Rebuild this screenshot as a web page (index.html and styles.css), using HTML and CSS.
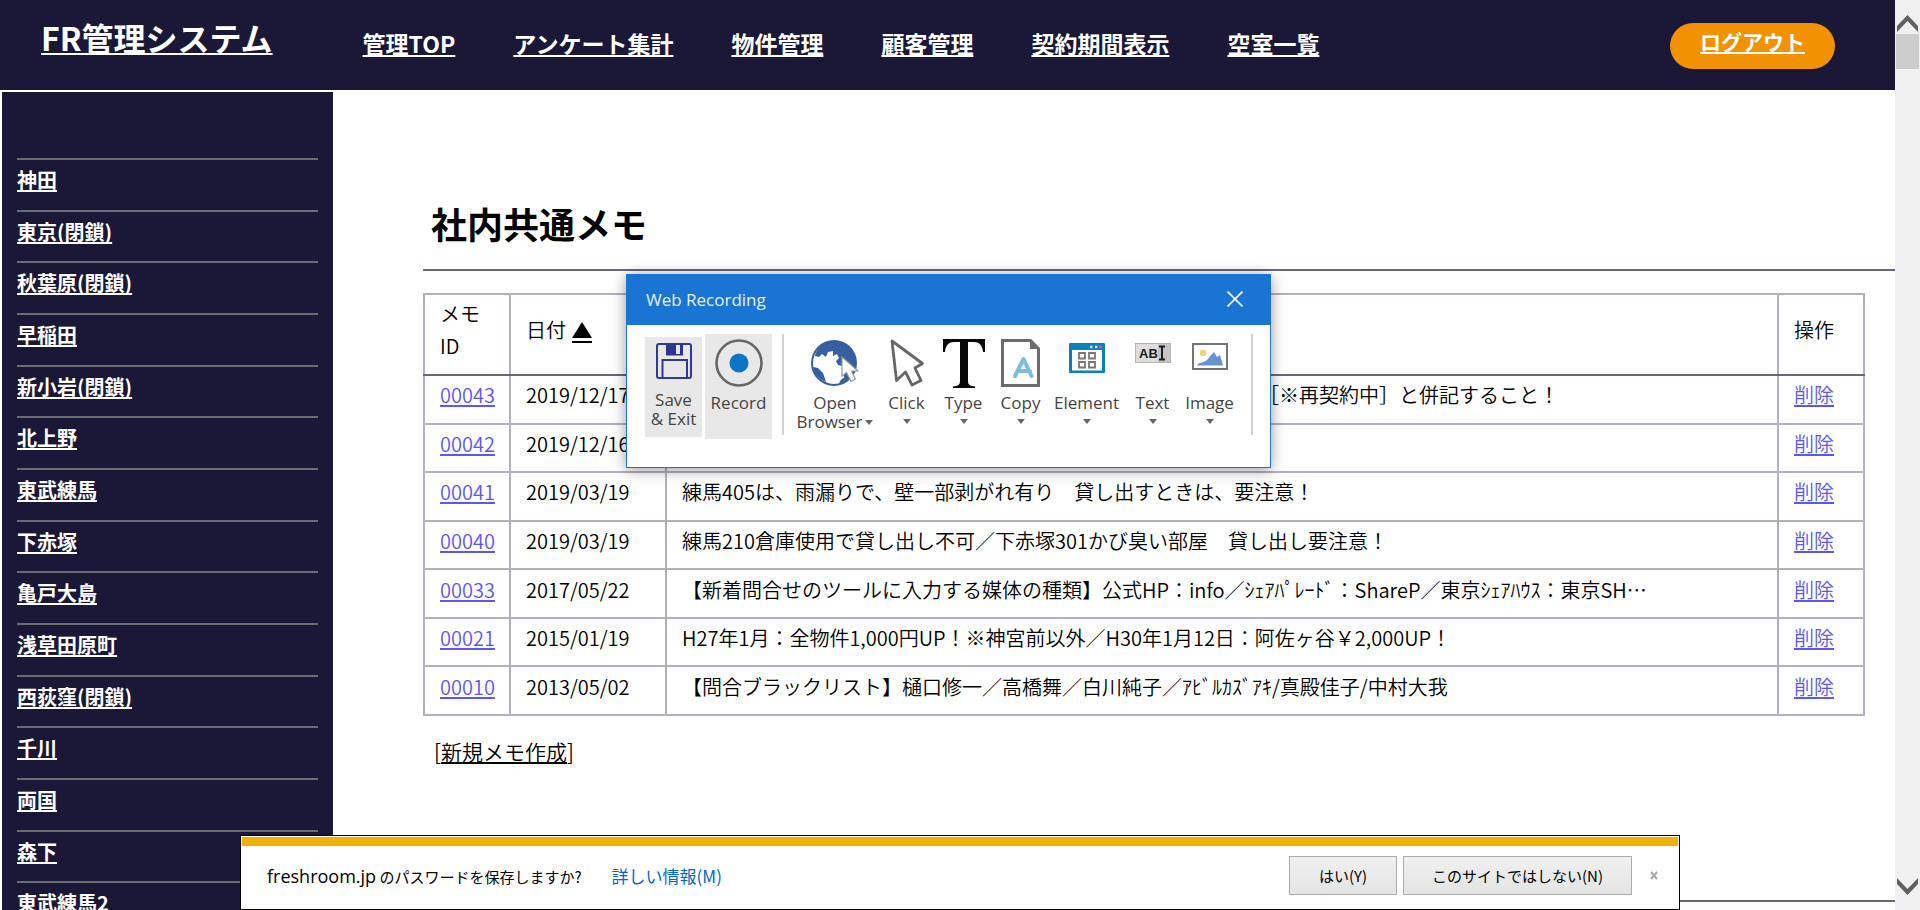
FILE: index.html
```
<!DOCTYPE html>
<html lang="ja">
<head>
<meta charset="utf-8">
<title>FR管理システム</title>
<link rel="stylesheet" href="styles.css">
</head>
<body>
<div class="viewport">
  <div class="page">
    <header class="header">
      <a class="logo" href="#">FR管理システム</a>
      <nav class="nav">
        <a href="#">管理TOP</a>
        <a href="#">アンケート集計</a>
        <a href="#">物件管理</a>
        <a href="#">顧客管理</a>
        <a href="#">契約期間表示</a>
        <a href="#">空室一覧</a>
      </nav>
      <a class="logout" href="#">ログアウト</a>
    </header>
    <div class="body">
      <aside class="sidebar">
        <ul class="places">
          <li><a href="#">神田</a></li>
          <li><a href="#">東京(閉鎖)</a></li>
          <li><a href="#">秋葉原(閉鎖)</a></li>
          <li><a href="#">早稲田</a></li>
          <li><a href="#">新小岩(閉鎖)</a></li>
          <li><a href="#">北上野</a></li>
          <li><a href="#">東武練馬</a></li>
          <li><a href="#">下赤塚</a></li>
          <li><a href="#">亀戸大島</a></li>
          <li><a href="#">浅草田原町</a></li>
          <li><a href="#">西荻窪(閉鎖)</a></li>
          <li><a href="#">千川</a></li>
          <li><a href="#">両国</a></li>
          <li><a href="#">森下</a></li>
          <li><a href="#">東武練馬2</a></li>
        </ul>
      </aside>
      <main class="main">
        <h1 class="title">社内共通メモ</h1>
        <table class="memos">
          <colgroup><col class="col-id"><col class="col-date"><col><col class="col-op"></colgroup>
          <thead>
            <tr><th>メモ<br>ID</th><th>日付 <a class="sort" href="#" aria-label="並べ替え"><svg width="20" height="16" viewBox="0 0 20 16"><path d="M10 0L20 16H0z"/></svg></a></th><th></th><th>操作</th></tr>
          </thead>
          <tbody>
            <tr><td><a href="#">00043</a></td><td>2019/12/17</td><td class="tail">［※再契約中］と併記すること！</td><td><a href="#">削除</a></td></tr>
            <tr><td><a href="#">00042</a></td><td>2019/12/16</td><td></td><td><a href="#">削除</a></td></tr>
            <tr><td><a href="#">00041</a></td><td>2019/03/19</td><td>練馬405は、雨漏りで、壁一部剥がれ有り　貸し出すときは、要注意！</td><td><a href="#">削除</a></td></tr>
            <tr><td><a href="#">00040</a></td><td>2019/03/19</td><td>練馬210倉庫使用で貸し出し不可／下赤塚301かび臭い部屋　貸し出し要注意！</td><td><a href="#">削除</a></td></tr>
            <tr><td><a href="#">00033</a></td><td>2017/05/22</td><td>【新着問合せのツールに入力する媒体の種類】公式HP：info／ｼｪｱﾊﾟﾚｰﾄﾞ：ShareP／東京ｼｪｱﾊｳｽ：東京SH…</td><td><a href="#">削除</a></td></tr>
            <tr><td><a href="#">00021</a></td><td>2015/01/19</td><td>H27年1月：全物件1,000円UP！※神宮前以外／H30年1月12日：阿佐ヶ谷￥2,000UP！</td><td><a href="#">削除</a></td></tr>
            <tr><td><a href="#">00010</a></td><td>2013/05/02</td><td>【問合ブラックリスト】樋口修一／高橋舞／白川純子／ｱﾋﾞﾙｶｽﾞｱｷ/真殿佳子/中村大我</td><td><a href="#">削除</a></td></tr>
          </tbody>
        </table>
        <p class="create">[<a href="#">新規メモ作成</a>]</p>
      </main>
    </div>
  </div>
  <div class="scrollbar">
    <button class="scroll-btn" aria-label="上へ"><svg width="21" height="17" viewBox="0 0 21 17"><path d="M0 11L10.500 0L21 11V17L10.500 6L0 17z" fill="#606060"/></svg></button>
    <div class="thumb"></div>
    <button class="scroll-btn scroll-down" aria-label="下へ"><svg width="21" height="17" viewBox="0 0 21 17"><path d="M0 6L10.500 17L21 6V0L10.500 11L0 0z" fill="#606060"/></svg></button>
  </div>
</div>

<section class="recorder">
  <div class="rec-bar">
    <span>Web Recording</span>
    <button class="rec-close" aria-label="Close"><svg width="16" height="16" viewBox="0 0 16 16"><path d="M0.500 0.500L15.500 15.500M15.500 0.500L0.500 15.500" stroke="#fff" stroke-width="1.600"/></svg></button>
  </div>
  <div class="tools">
    <button class="tool tool-save">
      <span class="pic"><svg width="36" height="36" viewBox="0 0 36 36"><rect x="1" y="1" width="34" height="34" rx="2" fill="none" stroke="#2e3a96" stroke-width="2"/><path d="M10 1H27V12.500H10z" fill="#2b3694"/><rect x="20" y="2" width="4" height="9" fill="#e8e8e8"/><path d="M6.500 35V17H31V35" fill="none" stroke="#2e3a96" stroke-width="2"/></svg></span>
      <span>Save<br>&amp; Exit</span>
    </button>
    <button class="tool tool-record">
      <span class="pic"><svg width="48" height="48" viewBox="0 0 48 48"><circle cx="24" cy="24" r="22.500" fill="none" stroke="#666" stroke-width="2.600"/><circle cx="24" cy="24" r="9.500" fill="#0a76c4"/></svg></span>
      <span>Record</span>
    </button>
    <span class="rule"></span>
    <button class="tool tool-open">
      <span class="pic"><svg width="48" height="48" viewBox="0 0 48 48"><circle cx="23" cy="24" r="22" fill="#fff" stroke="#365f9f" stroke-width="2"/><path d="M4 16C8 6 16 2 23 2C36 2 45 12 45 23C45 32 41 38 36 41L33 41V29L31 27L27 26L25 22L28 19L26 15L22 17L22 12L17 13L15 18L11 15L8 18L4 17z" fill="#365f9f"/><path d="M2 28L7 29L12 34L15 43C8 40 3 35 2 28zM29 42L32 39L36 41L28 45z" fill="#365f9f"/><path d="M31 18V37L35.500 33.500L40 42.500L44.500 40L40.500 32H47z" fill="#fff" stroke="#999" stroke-width="1.200"/></svg></span>
      <span>Open<br>Browser<i class="arrow"></i></span>
    </button>
    <button class="tool">
      <span class="pic"><svg width="34" height="48" viewBox="0 0 34 48"><path d="M2 2L6.500 41.500L15.500 33L22 46L31 41.500L25 29L32.500 24.500z" fill="#fff" stroke="#666" stroke-width="2.800" stroke-linejoin="round"/></svg></span>
      <span>Click</span><i class="arrow"></i>
    </button>
    <button class="tool">
      <span class="pic"><svg width="42" height="49" viewBox="0 0 42 49"><path d="M0 0H42V13H40C39.500 6 36 3 31 3H25V42C25 46 27 47 32 47.500V49H10V47.500C15 47 17 46 17 42V3H11C6 3 2.500 6 2 13H0z" fill="#080808"/></svg></span>
      <span>Type</span><i class="arrow"></i>
    </button>
    <button class="tool">
      <span class="pic"><svg width="39" height="48" viewBox="0 0 39 48"><path d="M1.500 1.500H29.500L37.500 9.500V46.500H1.500z" fill="#fff" stroke="#6c6c6c" stroke-width="3"/><path d="M29 1V10H38z" fill="#6c6c6c"/><path d="M14 37L22.500 20L30.500 37M17 32H29" fill="none" stroke="#7dbde2" stroke-width="4" stroke-linecap="round" stroke-linejoin="round"/></svg></span>
      <span>Copy</span><i class="arrow"></i>
    </button>
    <button class="tool tool-wide">
      <span class="pic pic-small"><svg width="36" height="30" viewBox="0 0 36 30"><rect width="36" height="30" rx="1" fill="#0c7fbf"/><rect x="3" y="7" width="30" height="20.500" fill="#fff"/><path d="M21 4H23.500M26 4H28.500" stroke="#bfe3f5" stroke-width="2.500"/><circle cx="31.500" cy="4" r="1.600" fill="#d9607a"/><path d="M10 10H16V15.500H10zM20 10H26V15.500H20zM10 19H16V24.500H10zM20 19H26V24.500H20z" fill="#fff" stroke="#777" stroke-width="1.800"/></svg></span>
      <span>Element</span><i class="arrow"></i>
    </button>
    <button class="tool">
      <span class="pic pic-small"><svg width="36" height="20" viewBox="0 0 36 20"><rect x="0.500" y="0.500" width="35" height="19" fill="#ddd" stroke="#b5b5b0"/><rect x="23" y="1" width="12" height="18" fill="#c6c6c6"/><text x="4" y="15" class="ab">AB</text><path d="M24 3.500H30M24 16.500H30M27 3.500V16.500" stroke="#1b1b1b" stroke-width="2"/></svg></span>
      <span>Text</span><i class="arrow"></i>
    </button>
    <button class="tool">
      <span class="pic pic-small"><svg width="36" height="27" viewBox="0 0 36 27"><rect x="1" y="1" width="34" height="25" fill="#fff" stroke="#757575" stroke-width="2"/><circle cx="11" cy="10" r="3.200" fill="#efd66c"/><path d="M5 22.500C6 19 13 20 16 16L20 11L22 9L25 14L28 12L31 22.500z" fill="#6693cf"/></svg></span>
      <span>Image</span><i class="arrow"></i>
    </button>
    <span class="rule rule-end"></span>
  </div>
</section>

<section class="notice">
  <div class="notice-row">
    <p class="notice-text"><span class="domain">freshroom.jp</span> のパスワードを保存しますか?</p>
    <a class="more" href="#">詳しい情報(M)</a>
    <button class="choice">はい(Y)</button>
    <button class="choice choice-never">このサイトではしない(N)</button>
    <button class="dismiss" aria-label="閉じる"><svg width="8" height="9" viewBox="0 0 8 9"><path d="M1 1L7 8M7 1L1 8" stroke="#a5a5a5" stroke-width="2"/></svg></button>
  </div>
</section>
</body>
</html>
```
FILE: styles.css
```
* { box-sizing: border-box; }

body {
  margin: 0;
  height: 100vh;
  overflow: hidden;
  background: #fff;
  color: #000;
  font-family: "Noto Sans CJK JP", sans-serif;
  font-size: 20px;
}

a {
  color: inherit;
  text-decoration: underline 2px;
  text-underline-offset: 2px;
  text-decoration-skip-ink: none;
}

button {
  margin: 0;
  padding: 0;
  border: 0;
  background: none;
  font: inherit;
  color: inherit;
}

svg { display: block; }

.viewport { display: flex; height: 100vh; }
.page { flex: 1; min-width: 0; overflow: hidden; }

/* Header */
.header {
  display: flex;
  height: 90px;
  padding: 0 60px 0 41px;
  background: #1a1836;
  color: #fff;
  font-weight: 700;
}
.logo { padding-top: 13px; font-size: 32px; line-height: 48px; white-space: nowrap; }
.nav {
  display: flex;
  flex: 1;
  gap: 58px;
  padding: 26px 0 0 90px;
  font-size: 23px;
  line-height: 34px;
  white-space: nowrap;
}
.logout {
  align-self: flex-start;
  margin-top: 23px;
  padding: 3px 30px 13px;
  border-radius: 23px;
  background: #f39200;
  font-size: 21px;
  line-height: 30px;
}

/* Sidebar */
.body { display: flex; padding: 2px 0 0 2px; }
.sidebar {
  flex: none;
  width: 331px;
  padding: 66px 15px 0;
  background: #1a1836;
  color: #fff;
  font-weight: 700;
}
.places {
  display: grid;
  grid-template-rows: repeat(15, 1fr);
  height: 775px;
  margin: 0;
  padding: 0;
  list-style: none;
}
.places li { border-top: 2px solid #6b6e70; padding-top: 5px; line-height: 30px; }

/* Memo list */
.main {
  flex: 1;
  height: 810px;
  margin-left: 90px;
  border-bottom: 2px solid #68677c;
}
.title {
  margin: 0 0 22px;
  padding: 104px 0 18px 8px;
  border-bottom: 2px solid #68677c;
  font-size: 36px;
  line-height: 55px;
}
.memos {
  width: calc(100% - 30px);
  height: 423px;
  border-collapse: collapse;
  table-layout: fixed;
  line-height: 32px;
}
.col-id { width: 86px; }
.col-date { width: 156px; }
.col-op { width: 86px; }
.memos th, .memos td {
  padding: 3px 15px 11px;
  border: 2px solid #b3b1bf;
  font-weight: 350;
  text-align: left;
  white-space: nowrap;
}
.memos thead th { padding-bottom: 12px; border-bottom-color: #68677c; }
.memos td a { color: #5b57ff; }
.memos td.tail { padding-left: 592px; }
.sort {
  display: inline-block;
  margin-left: 2px;
  border-bottom: 2px solid #000;
  padding-bottom: 3px;
  vertical-align: -5px;
}
.create { margin: 18px 0 0 11px; font-size: 21px; font-weight: 350; line-height: 34px; }

/* Scrollbar */
.scrollbar {
  display: flex;
  flex-direction: column;
  flex: none;
  width: 25px;
  padding: 13px 1px;
  background: #f0f0f0;
}
.scroll-btn { align-self: center; height: 21px; }
.thumb { height: 35px; background: #cdcdcd; }
.scroll-down { margin-top: auto; }

/* Floating recorder window */
.recorder {
  position: absolute;
  left: 626px;
  top: 274px;
  width: 645px;
  height: 194px;
  border: 1px solid #1a74d4;
  background: #fff;
  box-shadow: 0 2px 14px rgba(0, 0, 0, .4);
  color: #444;
  font: 17px/19px "Open Sans", "Noto Sans", sans-serif;
}
.rec-bar {
  display: flex;
  align-items: center;
  justify-content: space-between;
  height: 50px;
  padding: 0 27px 2px 19px;
  background: #1a74d4;
  color: #e6f0fb;
}
.tools { display: flex; padding: 9px 0 0 18px; }
.tool {
  display: flex;
  flex-direction: column;
  align-items: center;
  width: 57px;
  white-space: nowrap;
}
.pic { display: flex; justify-content: center; height: 59px; padding-top: 5px; }
.pic-small { padding-top: 9px; }
.tool-save { height: 100px; margin: 3px 3px 0 0; background: #e8e8e8; }
.tool-save .pic { height: 53px; padding-top: 6px; }
.tool-record { width: 67px; height: 105px; background: #e8e8e8; }
.tool-open { width: 86px; }
.tool-wide { width: 75px; }
.rule { width: 2px; height: 101px; margin: 0 8px 0 10px; background: #d2d2d2; }
.rule-end { margin: 0 0 0 13px; }
.arrow {
  width: 0;
  margin-top: 7px;
  border: 4px solid transparent;
  border-top: 5px solid #666;
  border-bottom: 0;
}
.tool-open .arrow { display: inline-block; margin: 0 0 3px 3px; }
.ab { font: 700 13px "Liberation Sans", sans-serif; fill: #1b1b1b; }

/* Password notification bar */
.notice {
  position: fixed;
  left: 12.5%;
  bottom: 0;
  width: 75%;
  padding: 1px;
  border: 1px solid #000;
  background: #fff;
}
.notice-row {
  display: flex;
  align-items: center;
  border-top: 9px solid #f2b100;
  padding: 10px 20px 13px 25px;
  font-size: 15px;
}
.notice-text { margin: 0 30px 0 0; }
.domain { font: 18px "Open Sans", sans-serif; }
.more { margin-right: auto; color: #06c; font-size: 17px; text-decoration: none; }
.choice {
  width: 108px;
  height: 39px;
  margin-right: 6px;
  border: 1px solid #acacac;
  background: linear-gradient(#f0f0f0, #e4e4e4);
}
.choice-never { width: 229px; margin-right: 18px; }
```
